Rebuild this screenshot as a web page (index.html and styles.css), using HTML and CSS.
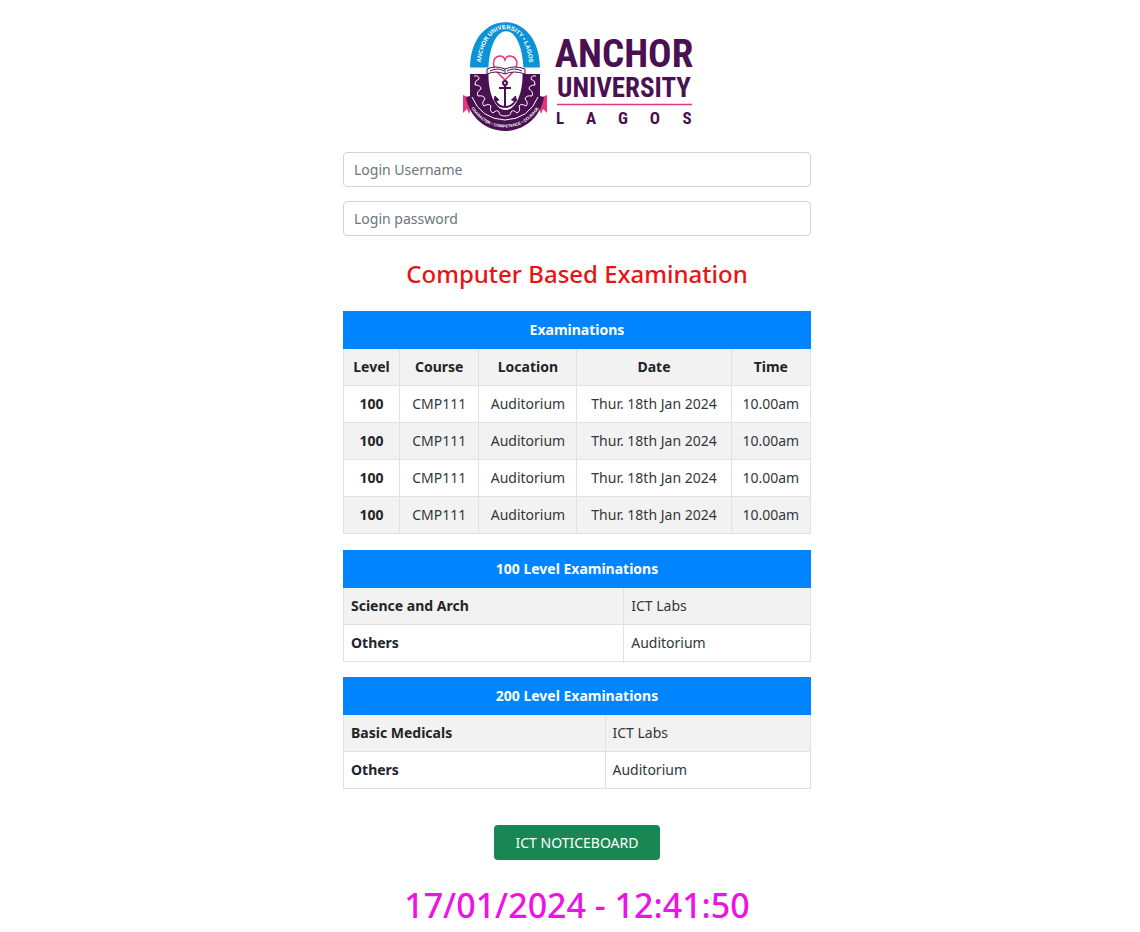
FILE: index.html
```html
<!DOCTYPE html>
<html lang="en">
<head>
<meta charset="utf-8">
<meta name="viewport" content="width=device-width, initial-scale=1">
<title>Anchor University Lagos - Computer Based Examination</title>
<link rel="stylesheet" href="styles.css">
</head>
<body>
<main class="page">
  <svg class="logo" viewBox="460 20 234 112" role="img" aria-label="Anchor University Lagos">
    <defs>
      <path id="arc-top" d="M480.500 68 C482 16 528 16 529.500 68"/>
      <path id="arc-bottom" d="M468 103 Q481 127 505 127.500 Q529 127 542 103"/>
    </defs>
    <path class="pink" d="M463 95 L474 100 L476 112 L471 108 L469 114 L467 109 L463 113 Z"/>
    <path class="pink" d="M547 95 L536 100 L534 112 L539 108 L541 114 L543 109 L547 113 Z"/>
    <path class="sky" d="M470 67.500 C471 7 539 7 540 67.500 H523.500 C521 19 491 19 488.500 67.500 Z"/>
    <path class="plum" d="M470 74 H540 V96 L544 97 C541 117 524 131 505 131 C486 131 469 117 466 97 L470 96 Z"/>
    <path class="paper" d="M488.500 73 H522.500 C523 93 516 110 505.500 110 C495 110 488 93 488.500 73 Z"/>
    <path class="gear" d="M474 76 Q479 75 479 79 Q474 81 475 85 Q481 85 481 89 Q476 92 478 96 Q484 95 485 99 Q481 103 484 106 Q489 103 491 106 Q489 111 493 113 Q497 109 499 112 Q499 116 505 116 Q511 116 511 112 Q513 109 517 113 Q521 111 519 106 Q521 103 526 106 Q529 103 525 99 Q526 95 532 96 Q534 92 529 89 Q529 85 535 85 Q536 81 531 79 Q531 75 536 76"/>
    <path class="rim" d="M472 97 Q481 119 505 120 Q529 119 538 97"/>
    <path class="heart" d="M505 80 C499 74 493 69 493.500 63 C494 55 503 54 505 60 C507 54 516 55 517 63 C517 69 511 74 505 80 Z"/>
    <path class="book" d="M487 69 Q496 65 505 69 Q514 65 525 69 V74 Q514 70 505 74 Q496 70 487 74 Z M505 69 V74 M490 71 Q498 67 504 71 M507 71 Q514 67 522 71"/>
    <g class="anchor">
      <circle cx="505" cy="83" r="2"/>
      <path d="M505 85 V107 M499 88 H511 M495 99 Q497 107 505 107 Q513 107 516 99"/>
      <path class="plum" d="M494 101 L495 96 L499 100 Z M516.500 101 L515.500 96 L511.500 100 Z"/>
    </g>
    <text class="ring ring-top"><textPath href="#arc-top" startOffset="50%">ANCHOR UNIVERSITY • LAGOS</textPath></text>
    <text class="ring ring-bottom"><textPath href="#arc-bottom" startOffset="50%">CHARACTER • COMPETENCE • COURAGE</textPath></text>
    <text class="word word-large" x="624" y="67">ANCHOR</text>
    <text class="word word-medium" x="624" y="97">UNIVERSITY</text>
    <path class="rule" d="M557 104.500 H692"/>
    <text class="word word-small" x="560 591 623 655 687" y="124">LAGOS</text>
  </svg>

  <form class="login">
    <input class="field" type="text" placeholder="Login Username" aria-label="Login Username">
    <input class="field" type="password" placeholder="Login password" aria-label="Login password">
  </form>

  <h1 class="title">Computer Based Examination</h1>

  <table class="table schedule">
    <colgroup><col class="c-level"><col class="c-course"><col class="c-location"><col class="c-date"><col class="c-time"></colgroup>
    <thead><tr><th colspan="5">Examinations</th></tr></thead>
    <tbody>
      <tr><th scope="col">Level</th><th scope="col">Course</th><th scope="col">Location</th><th scope="col">Date</th><th scope="col">Time</th></tr>
      <tr><th scope="row">100</th><td>CMP111</td><td>Auditorium</td><td>Thur. 18th Jan 2024</td><td>10.00am</td></tr>
      <tr><th scope="row">100</th><td>CMP111</td><td>Auditorium</td><td>Thur. 18th Jan 2024</td><td>10.00am</td></tr>
      <tr><th scope="row">100</th><td>CMP111</td><td>Auditorium</td><td>Thur. 18th Jan 2024</td><td>10.00am</td></tr>
      <tr><th scope="row">100</th><td>CMP111</td><td>Auditorium</td><td>Thur. 18th Jan 2024</td><td>10.00am</td></tr>
    </tbody>
  </table>

  <table class="table venues">
    <colgroup><col class="c-group-100"><col></colgroup>
    <thead><tr><th colspan="2">100 Level Examinations</th></tr></thead>
    <tbody>
      <tr><th scope="row">Science and Arch</th><td>ICT Labs</td></tr>
      <tr><th scope="row">Others</th><td>Auditorium</td></tr>
    </tbody>
  </table>

  <table class="table venues">
    <colgroup><col class="c-group-200"><col></colgroup>
    <thead><tr><th colspan="2">200 Level Examinations</th></tr></thead>
    <tbody>
      <tr><th scope="row">Basic Medicals</th><td>ICT Labs</td></tr>
      <tr><th scope="row">Others</th><td>Auditorium</td></tr>
    </tbody>
  </table>

  <button class="notice" type="button">ICT NOTICEBOARD</button>
  <time class="clock" datetime="2024-01-17T12:41:50">17/01/2024 - 12:41:50</time>
</main>
</body>
</html>
```

FILE: styles.css
```css
* { box-sizing: border-box; }
body {
  margin: 0;
  padding-left: 14px;
  background: #fff;
  color: #212529;
  font: 14px/22px "Noto Sans", "Open Sans", sans-serif;
}
.page {
  display: flex;
  flex-direction: column;
  align-items: center;
  width: 100%;
  max-width: 468px;
  margin: 0 auto;
  padding-top: 20px;
}

.logo { width: 50%; min-width: 232px; overflow: visible; }
.pink { fill: #e5357f; }
.sky { fill: #0c93d5; }
.plum { fill: #4a1152; }
.paper { fill: #fff; }
.gear { fill: none; stroke: #fff; stroke-width: 1; }
.rim { fill: none; stroke: #fff; stroke-width: 1; }
.heart { fill: #fff; stroke: #e5357f; stroke-width: 1.5; }
.book { fill: #fff; stroke: #4a1152; stroke-width: 1; }
.anchor { fill: none; stroke: #4a1152; stroke-width: 2; }
.anchor .plum { fill: #4a1152; stroke-width: 1; }
.ring {
  fill: #fff;
  font-family: "Liberation Sans", sans-serif;
  font-weight: 700;
  text-anchor: middle;
}
.ring-top { font-size: 6px; }
.ring-bottom { font-size: 4px; }
.word {
  fill: #4a1152;
  font-family: "Liberation Sans Narrow", "Roboto Condensed", "Liberation Sans", sans-serif;
  font-weight: 700;
  text-anchor: middle;
}
.word-large { font-size: 39px; }
.word-medium { font-size: 27px; }
.word-small { font-size: 17px; }
.rule { stroke: #e5357f; stroke-width: 1.5; }

.login {
  display: grid;
  gap: 14px;
  width: 100%;
  margin-top: 20px;
}
.field {
  width: 100%;
  height: 35px;
  padding: 5px 10px;
  border: 1px solid #ced4da;
  border-radius: 4px;
  background: #fff;
  color: #212529;
  font: inherit;
}
.field::placeholder { color: #6c757d; opacity: 1; }

.title {
  margin: 22px 0 21px;
  color: #e81313;
  font-size: 24px;
  font-weight: 500;
  line-height: 32px;
}

.table {
  width: 100%;
  margin-bottom: 15px;
  border-collapse: collapse;
  table-layout: fixed;
}
.table th, .table td {
  padding: 7px;
  border: 1px solid #dee2e6;
}
.table td { color: #32373b; }
.table thead th {
  background: #0084ff;
  border-color: #0084ff;
  color: #fff;
  text-align: center;
}
.table tbody tr:nth-child(odd) { background: #f2f2f2; }
.schedule { margin-bottom: 16px; text-align: center; }
.venues { text-align: left; }
.c-level { width: 12%; }
.c-course { width: 17%; }
.c-location { width: 21%; }
.c-date { width: 33%; }
.c-time { width: 17%; }
.c-group-100 { width: 60%; }
.c-group-200 { width: 56%; }

.notice {
  height: 35px;
  margin-top: 21px;
  padding: 0 22px;
  border: 0;
  border-radius: 4px;
  background: #198754;
  color: #fff;
  font: inherit;
}
.clock {
  margin-top: 21px;
  color: #ec14e4;
  font-size: 34px;
  font-weight: 500;
  line-height: 48px;
}
```
